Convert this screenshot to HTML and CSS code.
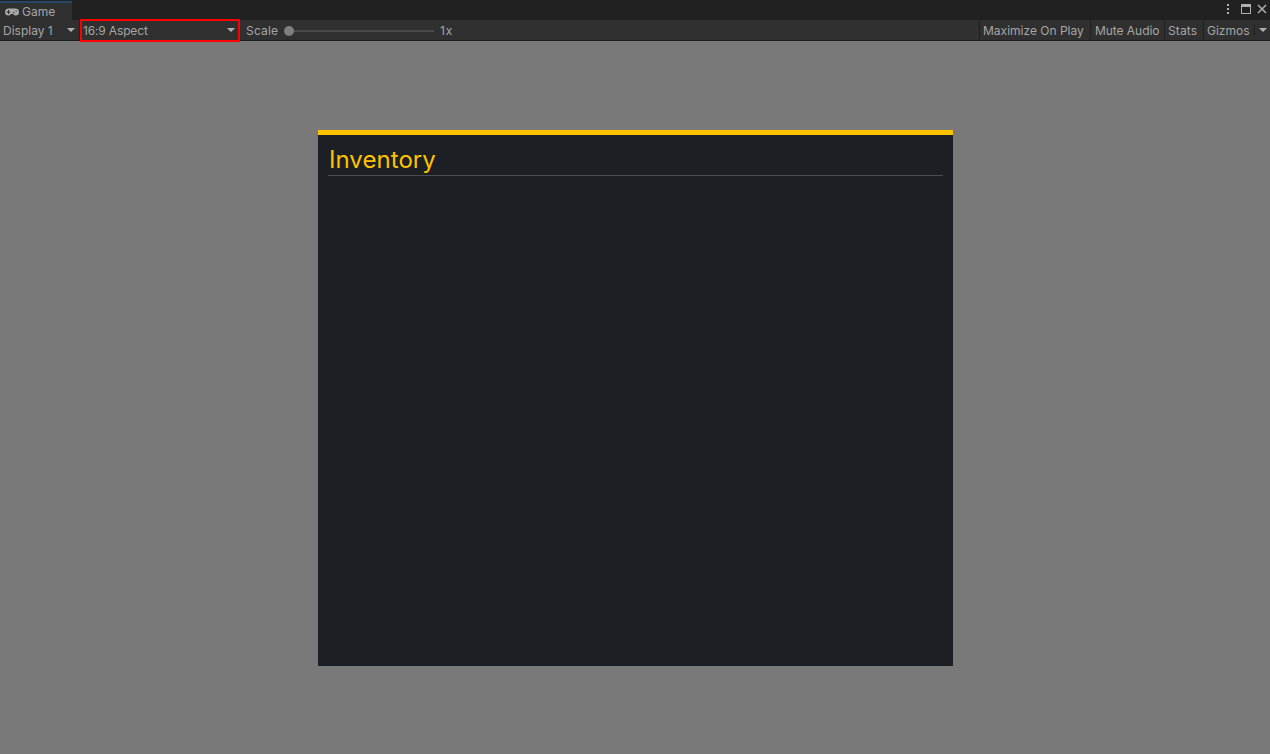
FILE: index.html
```html
<!DOCTYPE html>
<html lang="en">
<head>
<meta charset="utf-8">
<title>Game</title>
<link rel="stylesheet" href="styles.css">
</head>
<body>
<div class="window">
  <header class="tabs">
    <div class="tab">
      <svg class="pad" width="14" height="8" viewBox="0 0 14 8"><path fill="#aaa" fill-rule="evenodd" d="M3.500 .5H10.500A3.500 3.500 0 0 1 10.500 7.500Q9 7.500 8.300 6H5.700Q5 7.500 3.500 7.500A3.500 3.500 0 0 1 3.500 .5ZM3 2V3.500H1.500V4.500H3V6H4V4.500H5.500V3.500H4V2ZM8.200 4V5.200H9.400V4ZM10.600 2.400V3.600H11.800V2.400Z"/></svg>
      <span>Game</span>
    </div>
    <div class="controls">
      <svg width="44" height="12" viewBox="0 0 44 12"><g fill="#b0b0b0"><path d="M2 1h2v2H2zM2 5h2v2H2zM2 9h2v2H2z"/><path fill-rule="evenodd" d="M16 1h10v10H16zM17 4v6h8V4z"/></g><path d="M33 2l8 8M41 2l-8 8" stroke="#b0b0b0" stroke-width="1.500"/></svg>
    </div>
  </header>
  <div class="toolbar">
    <div class="dropdown display"><span>Display 1</span><i class="arrow"></i></div>
    <div class="dropdown aspect"><span>16:9 Aspect</span><i class="arrow"></i></div>
    <div class="scale"><span class="scale-label">Scale</span><div class="slider"><i class="knob"></i><i class="track"></i></div><span class="factor">1x</span></div>
    <div class="actions">
      <span class="action maximize">Maximize On Play</span>
      <span class="action mute">Mute Audio</span>
      <span class="action stats">Stats</span>
      <span class="action gizmos">Gizmos</span>
      <span class="more"><i class="arrow"></i></span>
    </div>
  </div>
  <main class="view">
    <section class="panel"><h1 class="title">Inventory</h1></section>
  </main>
</div>
</body>
</html>
```
FILE: styles.css
```css
* { box-sizing: border-box; }
body { margin: 0; font-family: Inter, sans-serif; font-size: 12px; color: #a6a6a6; }
.window { height: 754px; display: flex; flex-direction: column; overflow: hidden; background: #797979; }
.tabs { height: 20px; flex: none; display: flex; justify-content: space-between; background: #212121; }
.tab { width: 72px; margin-top: 1px; border-top: 2px solid #24476a; background: #303030; padding-left: 5px; display: flex; align-items: center; gap: 3px; line-height: 17px; }
.pad { flex: none; }
.controls { padding: 3px 1px 0 0; }
.controls svg { display: block; }
.toolbar { height: 21px; flex: none; display: flex; background: #303030; border-bottom: 1px solid #1c1c1c; line-height: 21px; white-space: nowrap; }
.dropdown { display: flex; justify-content: space-between; }
.arrow { flex: none; width: 8px; height: 4px; background: #b0b0b0; clip-path: polygon(0 0, 100% 0, 50% 100%); }
.display { width: 80px; padding: 0 4px 0 3px; border-right: 1px solid #222; }
.dropdown .arrow { margin-top: 8px; }
.aspect { width: 160px; height: 23px; margin-top: -1px; border: 2px solid #f00; padding: 0 3px 0 1px; line-height: 20px; position: relative; letter-spacing: -.15px; }
.aspect .arrow { margin-top: 7px; }
.scale { display: flex; padding-left: 6px; letter-spacing: .2px; }
.scale-label { width: 38px; }
.slider { width: 150px; margin-right: 6px; display: flex; align-items: center; }
.knob { width: 10px; height: 10px; border-radius: 50%; background: #7f7f7f; margin-top: 1px; }
.track { flex: 1; height: 2px; background: #4b4b4b; margin-top: 1px; }
.factor { letter-spacing: .8px; }
.actions { margin-left: auto; display: flex; }
.action { border-left: 1px solid #202020; padding-left: 3px; }
.maximize { width: 111px; }
.mute { width: 74px; padding-left: 4px; letter-spacing: -.05px; }
.stats { width: 39px; letter-spacing: .1px; }
.gizmos { width: 51px; }
.more { width: 16px; height: 12px; margin-top: 4px; border-left: 1px solid #222; padding: 4px 0 0 4px; }
.more .arrow { display: block; }
.view { flex: 1; padding: 89px 0 0 318px; }
.panel { width: 635px; height: 536px; border-top: 5px solid #ffc200; background: #1c1f23; padding: 10px 10px 0; }
.title { height: 31px; margin: 0; padding-left: 1px; border-bottom: 1px solid #4a4d50; color: #ffc200; font-size: 24px; font-weight: 400; line-height: 30px; letter-spacing: .05px; }
```
